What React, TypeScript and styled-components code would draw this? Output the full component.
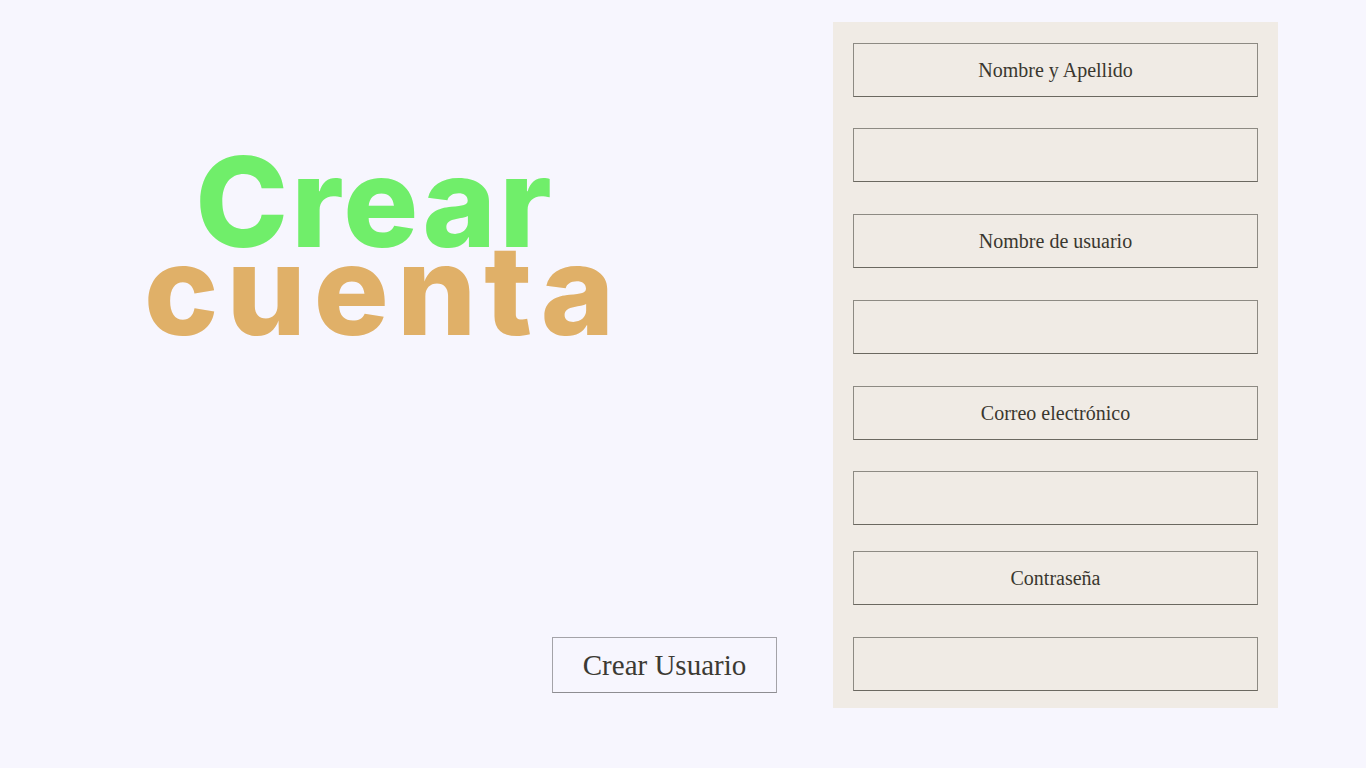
import React from "react";
import styled, { createGlobalStyle } from "styled-components";

const Global = createGlobalStyle`
  html, body { margin: 0; padding: 0; background: #f7f6fe; }
  body { font-family: "Liberation Serif", serif; }
`;

const Page = styled.div`
  width: 1366px;
  height: 768px;
  box-sizing: border-box;
  padding-top: 22px;
  display: flex;
  gap: 56px;
  background: #f7f6fe;
`;

const LeftColumn = styled.div`
  width: 777px;
  height: 685px;
  display: flex;
  flex-direction: column;
  justify-content: space-between;
`;

const Title = styled.h1`
  margin: 136px 0 0 144px;
  width: 465px;
  font-family: Inter, "Open Sans", sans-serif;
  font-weight: 800;
  font-size: 125px;
  line-height: 88px;
  text-align: center;
`;

const TitleLine = styled.span<{ $color: string; $spacing: number; $shift: number }>`
  display: block;
  color: ${(p) => p.$color};
  letter-spacing: ${(p) => p.$spacing}px;
  margin-right: ${(p) => p.$shift}px;
  white-space: nowrap;
`;

const SubmitButton = styled.button`
  align-self: flex-end;
  width: 225px;
  height: 56px;
  margin-bottom: 14px;
  background: transparent;
  border: 1px solid #a4a3a8;
  border-bottom-color: #8e8d92;
  font-family: "Liberation Serif", serif;
  font-size: 29px;
  color: #3c3a33;
  cursor: pointer;
`;

const Panel = styled.div`
  width: 445px;
  height: 686px;
  box-sizing: border-box;
  padding: 21px 20px 0;
  background: #f0ebe5;
  display: flex;
  flex-direction: column;
`;

const Field = styled.div<{ $gap: number }>`
  height: 54px;
  box-sizing: border-box;
  margin-top: ${(p) => p.$gap}px;
  border: 1px solid #8d8a83;
  border-bottom-color: #6b6860;
  display: flex;
  align-items: center;
  justify-content: center;
  font-family: "Liberation Serif", serif;
  font-size: 20px;
  color: #3a372f;
`;

const fields: { label: string; gap: number }[] = [
  { label: "Nombre y Apellido", gap: 0 },
  { label: "", gap: 31 },
  { label: "Nombre de usuario", gap: 32 },
  { label: "", gap: 32 },
  { label: "Correo electrónico", gap: 32 },
  { label: "", gap: 31 },
  { label: "Contraseña", gap: 26 },
  { label: "", gap: 32 },
];

export default function App() {
  return (
    <>
      <Global />
      <Page>
        <LeftColumn>
          <Title>
            <TitleLine $color="#70ee6a" $spacing={3} $shift={3}>Crear</TitleLine>
            <TitleLine $color="#e0b068" $spacing={8} $shift={-8}>cuenta</TitleLine>
          </Title>
          <SubmitButton>Crear Usuario</SubmitButton>
        </LeftColumn>
        <Panel>
          {fields.map((f, i) => (
            <Field key={i} $gap={f.gap}>
              {f.label}
            </Field>
          ))}
        </Panel>
      </Page>
    </>
  );
}
